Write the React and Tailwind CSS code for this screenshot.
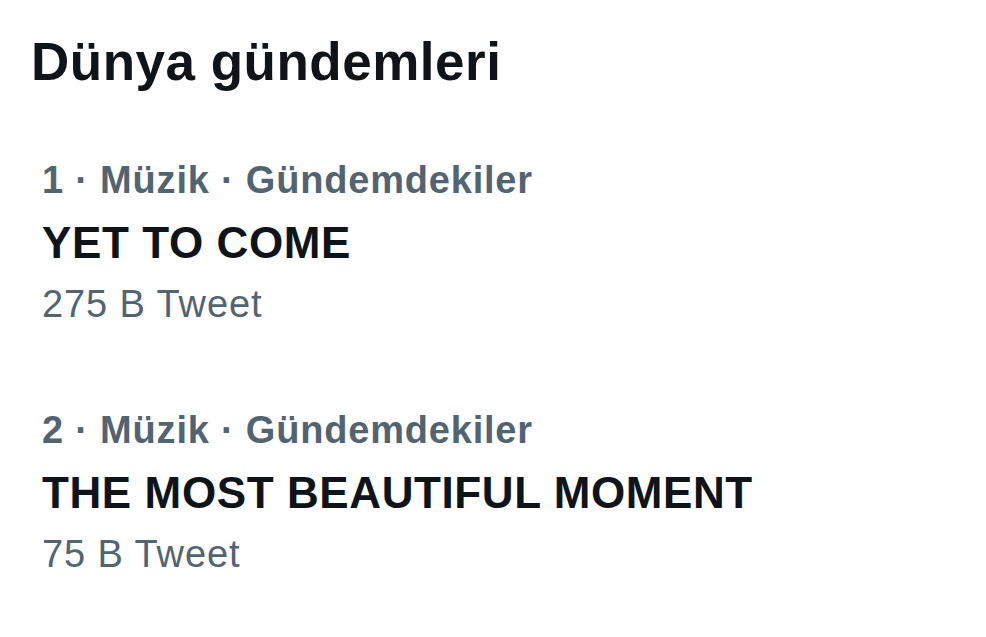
import React from 'react';

const trends = [
  { rank: 1, category: 'Müzik', title: 'YET TO COME', count: '275 B Tweet' },
  { rank: 2, category: 'Müzik', title: 'THE MOST BEAUTIFUL MOMENT', count: '75 B Tweet' },
];

const TrendItem = ({ trend }) => (
  <div className="pl-[42px] py-10">
    <div className="text-[38px] leading-[46px] font-bold text-[#536471] tracking-[0.8px]">
      {trend.rank} · {trend.category} · Gündemdekiler
    </div>
    <div className="mt-[14px] text-[44px] leading-[52px] font-bold text-[#0f1419] tracking-[0.6px]">
      {trend.title}
    </div>
    <div className="mt-[12px] text-[38px] leading-[46px] text-[#536471] tracking-[0.9px]">
      {trend.count}
    </div>
  </div>
);

export default function App() {
  return (
    <div className="w-[986px] h-[637px] bg-white overflow-hidden font-['Liberation_Sans',Arial,sans-serif]">
      <h2 className="pl-[31px] pt-[30px] text-[53px] leading-[64px] font-extrabold text-[#0f1419] tracking-[0.5px]">
        Dünya gündemleri
      </h2>
      <div className="mt-[23px]">
        {trends.map((t) => (
          <TrendItem key={t.rank} trend={t} />
        ))}
      </div>
    </div>
  );
}
